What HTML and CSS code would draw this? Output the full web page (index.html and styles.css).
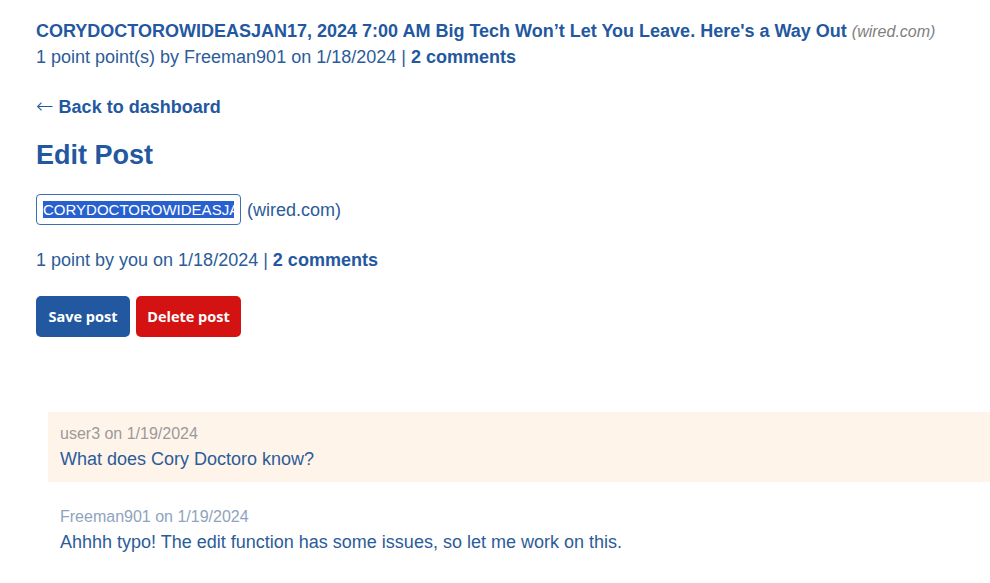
FILE: index.html
```html
<!DOCTYPE html>
<html>
<head>
<meta charset="utf-8">
<link rel="stylesheet" href="styles.css">
</head>
<body>
<main class="page">
  <section class="story">
    <div class="story-title"><a class="title-link" href="#">CORYDOCTOROWIDEASJAN17, 2024 7:00 AM Big Tech Won’t Let You Leave. Here's a Way Out</a> <span class="domain">(wired.com)</span></div>
    <div class="story-meta">1 point point(s) by Freeman901 on 1/18/2024 | <a class="strong-link" href="#">2 comments</a></div>
  </section>
  <a class="back" href="#"><span class="arrow">←</span> Back to dashboard</a>
  <h1 class="heading">Edit Post</h1>
  <div class="edit-row">
    <input class="title-input" type="text" value="CORYDOCTOROWIDEASJAN17, 2024 7:00 AM Big Tech Won’t Let You Leave. Here's a Way Out">
    <span class="edit-domain">(wired.com)</span>
  </div>
  <div class="edit-meta">1 point by you on 1/18/2024 | <a class="strong-link" href="#">2 comments</a></div>
  <div class="actions">
    <button class="btn btn-save">Save post</button>
    <button class="btn btn-delete">Delete post</button>
  </div>
  <section class="comments">
    <div class="comment comment-highlight">
      <div class="comment-meta">user3 on 1/19/2024</div>
      <div class="comment-body">What does Cory Doctoro know?</div>
    </div>
    <div class="comment">
      <div class="comment-meta comment-meta-blue">Freeman901 on 1/19/2024</div>
      <div class="comment-body">Ahhhh typo! The edit function has some issues, so let me work on this.</div>
    </div>
  </section>
</main>
<script>
  var i = document.querySelector('.title-input');
  i.focus();
  i.setSelectionRange(0, i.value.length);
  i.scrollLeft = 0;
</script>
</body>
</html>
```

FILE: styles.css
```css
html, body {
  margin: 0;
  padding: 0;
  background: #ffffff;
  overflow: hidden;
}
body {
  font-family: "Liberation Sans", Arial, sans-serif;
  color: #2b5c99;
  font-size: 18px;
}
a {
  color: #2358a0;
  text-decoration: none;
}
.page {
  padding: 18px 0 0 36px;
  display: flex;
  flex-direction: column;
  align-items: flex-start;
}
.story-title {
  line-height: 26px;
}
.title-link {
  font-weight: bold;
  color: #2358a0;
}
.domain {
  font-style: italic;
  color: #808080;
  font-size: 16px;
  line-height: 0;
}
.story-meta {
  line-height: 26px;
  color: #2b5c99;
}
.strong-link {
  font-weight: bold;
}
.back {
  margin-top: 24px;
  font-weight: bold;
  line-height: 26px;
}
.arrow {
  font-family: "DejaVu Sans", sans-serif;
  font-weight: 200;
  font-size: 21px;
  line-height: 0;
}
.heading {
  margin: 18px 0 0 0;
  font-size: 27px;
  line-height: 34px;
  color: #2358a0;
  font-weight: bold;
}
.edit-row {
  margin-top: 22px;
  display: flex;
  align-items: center;
  gap: 6px;
}
.title-input {
  width: 205px;
  height: 31px;
  box-sizing: border-box;
  border: 1px solid #3b6fb8;
  border-radius: 4px;
  padding: 0 6px;
  font-family: "Liberation Sans", Arial, sans-serif;
  font-size: 15px;
  color: #2b5c99;
  outline: none;
}
.title-input::selection {
  background: #2860d0;
  color: #ffffff;
}
.edit-domain {
  line-height: 26px;
}
.edit-meta {
  margin-top: 22px;
  line-height: 26px;
}
.actions {
  margin-top: 23px;
  display: flex;
  gap: 6px;
}
.btn {
  height: 41px;
  border: none;
  border-radius: 5px;
  padding: 0 8px;
  font-family: "Open Sans", "Noto Sans", sans-serif;
  font-weight: bold;
  font-size: 14.5px;
  color: #ffffff;
}
.btn-save {
  background: #22589f;
  width: 94px;
}
.btn-delete {
  background: #d41212;
  width: 105px;
}
.comments {
  margin-top: 75px;
  margin-left: 12px;
  align-self: stretch;
  display: flex;
  flex-direction: column;
  gap: 13px;
}
.comment {
  padding: 12px 12px 12px 12px;
}
.comment-highlight {
  background: #fff4ea;
}
.comment-meta {
  font-size: 16px;
  line-height: 20px;
  color: #9a9a9a;
}
.comment-meta-blue {
  color: #8fa3be;
}
.comment-body {
  margin-top: 4px;
  line-height: 22px;
  color: #2b5c99;
}
```
